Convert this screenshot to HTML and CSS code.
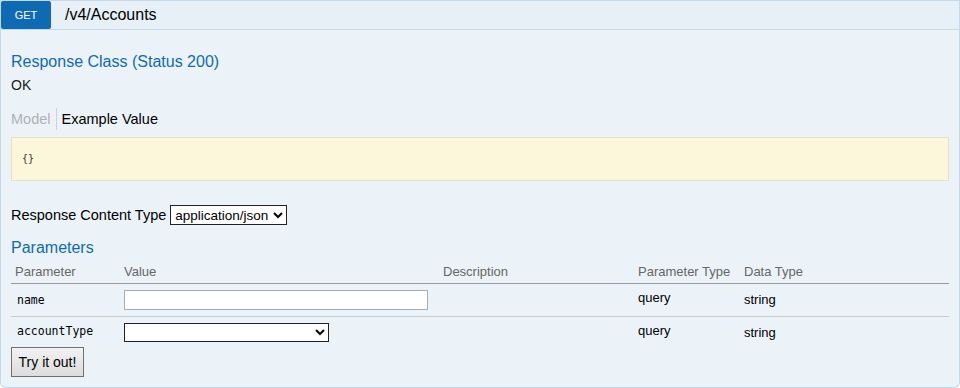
FILE: index.html
```html
<!DOCTYPE html>
<html lang="en">
<head>
  <meta charset="UTF-8">
  <title>GET /v4/Accounts</title>
  <link rel="stylesheet" href="styles.css">
</head>
<body>
  <div class="operation">
    <!-- HEADING -->
    <div class="heading">
      <span class="http-method">GET</span>
      <span class="path">/v4/Accounts</span>
    </div>

    <!-- CONTENT -->
    <div class="content">
      <h4>Response Class (Status 200)</h4>
      <p class="status-text">OK</p>

      <div class="signature-tabs">
        <span class="tab tab-model">Model</span>
        <span class="tab tab-active">Example Value</span>
      </div>
      <pre class="snippet">{}</pre>

      <div class="content-type">
        <label for="respType">Response Content Type</label>
        <select id="respType" class="select-type">
          <option>application/json</option>
        </select>
      </div>

      <h4 class="params-title">Parameters</h4>
      <table class="params">
        <thead>
          <tr>
            <th class="col-param">Parameter</th>
            <th class="col-value">Value</th>
            <th class="col-desc">Description</th>
            <th class="col-ptype">Parameter Type</th>
            <th class="col-dtype">Data Type</th>
          </tr>
        </thead>
        <tbody>
          <tr>
            <td class="code">name</td>
            <td><input type="text" class="param-input"></td>
            <td></td>
            <td>query</td>
            <td><span class="dtype">string</span></td>
          </tr>
          <tr class="row-last">
            <td class="code">accountType</td>
            <td>
              <select class="param-select">
                <option></option>
              </select>
            </td>
            <td></td>
            <td>query</td>
            <td><span class="dtype">string</span></td>
          </tr>
        </tbody>
      </table>

      <button class="submit">Try it out!</button>
    </div>
  </div>
</body>
</html>
```

FILE: styles.css
```css
:root {
  --blue: #0f6ab4;
  --border: #c3d9ec;
  --heading-bg: #e7f0f7;
  --content-bg: #ebf3f9;
  --text: #222;
}

* {
  box-sizing: border-box;
}

body {
  margin: 0;
  font-family: "Liberation Sans", Arial, sans-serif;
  font-size: 14.5px;
  color: var(--text);
  background: #fff;
}

.operation {
  width: 960px;
}

/* HEADING */
.heading {
  display: flex;
  align-items: stretch;
  height: 30px;
  background: var(--heading-bg);
  border: 1px solid var(--border);
}

.http-method {
  width: 50px;
  background: var(--blue);
  color: #fff;
  font-size: 11px;
  display: flex;
  align-items: center;
  justify-content: center;
  border-radius: 2px;
  margin-right: 14px;
}

.path {
  font-size: 16px;
  color: #000;
  display: flex;
  align-items: center;
}

/* CONTENT */
.content {
  background: var(--content-bg);
  border: 1px solid var(--border);
  border-top: none;
  border-radius: 0 0 6px 6px;
  padding: 22px 10px 10px 10px;
  height: 358px;
}

h4 {
  margin: 0;
  font-size: 16px;
  font-weight: normal;
  color: var(--blue);
  line-height: 20px;
}

.status-text {
  margin: 3px 0 0;
  font-size: 14px;
  line-height: 20px;
}

.signature-tabs {
  display: flex;
  margin-top: 13px;
  height: 22px;
  align-items: center;
}

.tab {
  font-size: 14.5px;
  padding: 0 5px 0 0;
  line-height: 22px;
}

.tab-model {
  color: #b0b0b0;
  border-right: 1px solid #d0d0d0;
}

.tab-active {
  color: #000;
  padding-left: 5px;
}

.snippet {
  margin: 7px 0 0;
  height: 44px;
  background: #fcf6db;
  border: 1px solid #e5e0c6;
  padding: 14px 10px;
  font-family: "DejaVu Sans Mono", monospace;
  font-size: 10px;
  line-height: 14px;
  color: #333;
}

.content-type {
  margin-top: 24px;
  display: flex;
  align-items: center;
  gap: 4px;
  height: 20px;
  color: #000;
}

.select-type {
  font-family: "Liberation Sans", Arial, sans-serif;
  font-size: 13.5px;
  height: 20px;
  width: 117px;
  border: 1px solid #222;
  border-radius: 0;
  background: #fff;
  padding: 0;
}

.params-title {
  margin-top: 13px;
}

/* TABLE */
.params {
  width: 100%;
  border-collapse: collapse;
  margin-top: 2px;
}

.params th {
  font-weight: normal;
  color: #666;
  text-align: left;
  font-size: 13px;
  padding: 4px 4px 4px;
  border-bottom: 1px solid #999;
}

.params td {
  font-size: 13px;
  color: #000;
  padding: 6px 4px;
  vertical-align: top;
  border-bottom: 1px solid #ccc;
}

.params .row-last td {
  border-bottom: none;
  padding-bottom: 2px;
}

.col-param { width: 109px; }
.col-value { width: 319px; }
.col-desc { width: 195px; }
.col-ptype { width: 106px; }

.params td.code {
  font-family: "DejaVu Sans Mono", monospace;
  font-size: 11.5px;
  padding-top: 9px;
  padding-left: 6px;
}

.params .row-last td.code {
  padding-top: 7px;
}

.dtype {
  display: inline-block;
  margin-top: 2px;
}

.param-input {
  width: 304px;
  height: 20px;
  border: 1px solid #aaa;
  background: #fff;
  margin: 0;
}

.param-select {
  width: 205px;
  height: 19px;
  border: 1px solid #222;
  border-radius: 0;
  background: #fff;
  margin: 0;
}

.submit {
  margin-top: 3px;
  width: 73px;
  height: 30px;
  font-family: "Liberation Sans", Arial, sans-serif;
  font-size: 14px;
  color: #000;
  border: 1px solid #707070;
  border-radius: 0;
  background: linear-gradient(#f2f2f2, #dcdcdc);
}
```
